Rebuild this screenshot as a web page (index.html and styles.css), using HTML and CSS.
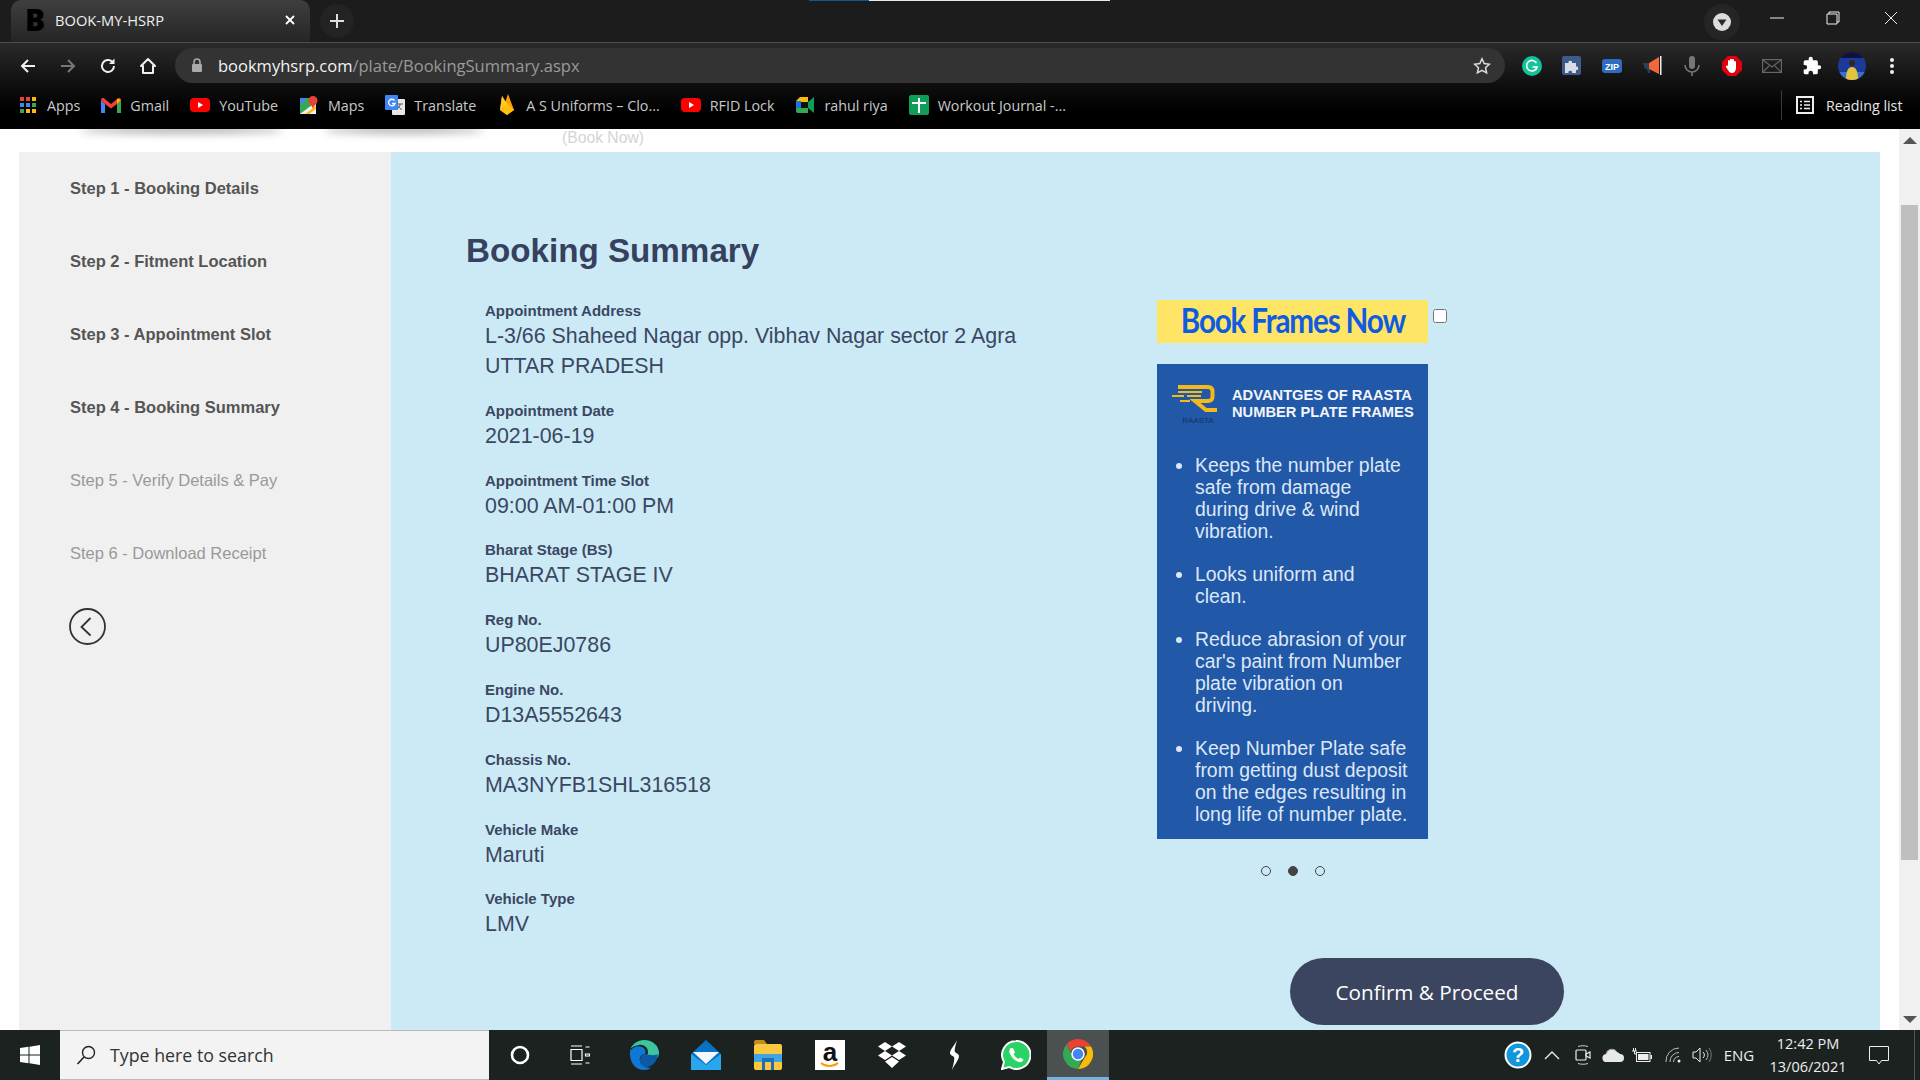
FILE: index.html
```html
<!DOCTYPE html>
<html lang="en">
<head>
  <meta charset="UTF-8">
  <title>BOOK-MY-HSRP</title>
  <link rel="stylesheet" href="styles.css">
</head>
<body>
  <!-- browser: tabs -->
  <div class="tabstrip">
    <div class="share-line"><span class="share-blue"></span></div>
    <div class="tab">
      <span class="favicon">B</span>
      <span class="tab-title">BOOK-MY-HSRP</span>
      <svg class="tab-close" width="12" height="12" viewBox="0 0 12 12"><path d="M2 2l8 8M10 2l-8 8" stroke="#fff" stroke-width="1.8"/></svg>
    </div>
    <div class="new-tab"><svg width="16" height="16" viewBox="0 0 16 16"><path d="M8 1v14M1 8h14" stroke="#ddd" stroke-width="2"/></svg></div>
    <div class="profile-btn"><svg width="20" height="20" viewBox="0 0 20 20"><circle cx="10" cy="10" r="9" fill="#dcdcdc"/><path d="M5.5 7.5h9L10 14z" fill="#2a2a2a"/></svg></div>
    <div class="win-btn"><svg width="14" height="2" viewBox="0 0 14 2"><path d="M0 1h14" stroke="#eee" stroke-width="1"/></svg></div>
    <div class="win-btn"><svg width="14" height="14" viewBox="0 0 14 14"><path d="M3 3V1h10v10h-2M1 3h10v10H1z" fill="none" stroke="#eee" stroke-width="1"/></svg></div>
    <div class="win-btn win-close"><svg width="14" height="14" viewBox="0 0 14 14"><path d="M1 1l12 12M13 1L1 13" stroke="#eee" stroke-width="1"/></svg></div>
  </div>

  <!-- browser: address bar -->
  <div class="toolbar">
    <div class="nav-btn"><svg width="18" height="18" viewBox="0 0 18 18"><path d="M16 9H3M9 3L3 9l6 6" fill="none" stroke="#f0f0f0" stroke-width="2"/></svg></div>
    <div class="nav-btn"><svg width="18" height="18" viewBox="0 0 18 18"><path d="M2 9h13M9 3l6 6-6 6" fill="none" stroke="#777" stroke-width="2"/></svg></div>
    <div class="nav-btn"><svg width="18" height="18" viewBox="0 0 18 18"><path d="M15 9a6 6 0 1 1-1.8-4.3" fill="none" stroke="#f0f0f0" stroke-width="2"/><path d="M15.5 1.5v5.5H10z" fill="#f0f0f0"/></svg></div>
    <div class="nav-btn"><svg width="18" height="18" viewBox="0 0 18 18"><path d="M9 2l7 7h-2v7H4V9H2z" fill="none" stroke="#f0f0f0" stroke-width="2" stroke-linejoin="round"/></svg></div>
    <div class="urlbox">
      <svg width="12" height="15" viewBox="0 0 12 15"><path d="M3 6V4a3 3 0 0 1 6 0v2" fill="none" stroke="#aaa" stroke-width="1.6"/><rect x="1" y="6" width="10" height="8" rx="1" fill="#aaa"/></svg>
      <span class="url"><b>bookmyhsrp.com</b>/plate/BookingSummary.aspx</span>
      <svg class="url-star" width="18" height="18" viewBox="0 0 18 18"><path d="M9 1.8l2.2 4.8 5.2.6-3.9 3.5 1.1 5.2L9 13.3l-4.6 2.6 1.1-5.2-3.9-3.5 5.2-.6z" fill="none" stroke="#ddd" stroke-width="1.5"/></svg>
    </div>
    <div class="ext-list">
      <div class="ext"><svg width="20" height="20" viewBox="0 0 20 20"><circle cx="10" cy="10" r="10" fill="#15c39a"/><path d="M14.5 7a5.3 5.3 0 1 0 .6 4H10.5" fill="none" stroke="#fff" stroke-width="1.6"/></svg></div>
      <div class="ext"><svg width="20" height="20" viewBox="0 0 20 20"><rect width="19" height="19" rx="2" fill="#3e5a88"/><path d="M3 7h3.500a1.800 1.800 0 1 1 3.500 0H14v3.500a1.800 1.800 0 1 1 0 3.500V17H10a1.800 1.800 0 1 0-3.500 0H3z" fill="#d6dde8"/></svg></div>
      <div class="ext"><svg width="20" height="14" viewBox="0 0 20 14"><rect width="20" height="14" rx="3" fill="#2f6cc0"/><text x="10" y="10.5" class="zip-text">ZIP</text></svg></div>
      <div class="ext"><svg width="20" height="20" viewBox="0 0 20 20"><path d="M7 7l10-6v17L7 13z" fill="#f2683c"/><rect x="18" y="0" width="1.5" height="19" fill="#eee"/><path d="M1 7h6v6H3z" fill="#24425f"/><path d="M5 13h3v4H6z" fill="#24425f"/></svg></div>
      <div class="ext"><svg width="16" height="20" viewBox="0 0 16 20"><rect x="5" y="0" width="6" height="13" rx="3" fill="#777"/><path d="M1 9a7 7 0 0 0 14 0M8 16v4" fill="none" stroke="#777" stroke-width="1.6"/></svg></div>
      <div class="ext"><svg width="20" height="20" viewBox="0 0 20 20"><path d="M6 0h8l6 6v8l-6 6H6l-6-6V6z" fill="#e2000f"/><path d="M6 8.500V5a1 1 0 0 1 2 0V3.800a1 1 0 0 1 2 0V4a1 1 0 0 1 2 0v2a1 1 0 0 1 2 0v6c0 3-2 5-4 5s-3-1-4-3l-2-3c-.5-1 .6-1.800 1.400-1z" fill="#fff"/></svg></div>
      <div class="ext"><svg width="20" height="14" viewBox="0 0 20 14"><rect x=".5" y=".5" width="19" height="13" fill="none" stroke="#666" stroke-width="1.4"/><path d="M1 1l9 7 9-7M1 13l6-6M19 13l-6-6" fill="none" stroke="#666" stroke-width="1.2"/></svg></div>
      <div class="ext"><svg width="20" height="20" viewBox="0 0 24 24"><path d="M20.500 11H19V7a2 2 0 0 0-2-2h-4V3.500a2.500 2.500 0 0 0-5 0V5H4a2 2 0 0 0-2 2v3.800h1.500a2.700 2.700 0 0 1 0 5.400H2V20a2 2 0 0 0 2 2h3.800v-1.500a2.700 2.700 0 0 1 5.400 0V22H17a2 2 0 0 0 2-2v-4h1.500a2.500 2.500 0 0 0 0-5z" fill="#fff"/></svg></div>
      <div class="ext"><svg width="28" height="28" viewBox="0 0 28 28"><defs><clipPath id="avatar-clip"><circle cx="14" cy="14" r="14"/></clipPath></defs><g clip-path="url(#avatar-clip)"><rect width="28" height="28" fill="#1c3a9a"/><rect y="0" width="28" height="6" fill="#10143c"/><rect y="20" width="28" height="8" fill="#3a6fc8"/><circle cx="14" cy="11" r="3" fill="#3a2416"/><path d="M8 28c0-9 2-13 6-13s6 4 6 13z" fill="#e3c33e"/></g></svg></div>
      <div class="ext"><svg width="4" height="18" viewBox="0 0 4 18"><circle cx="2" cy="3" r="2" fill="#eee"/><circle cx="2" cy="9" r="2" fill="#eee"/><circle cx="2" cy="15" r="2" fill="#eee"/></svg></div>
    </div>
  </div>

  <!-- browser: bookmarks -->
  <div class="bookmarks">
    <div class="bm"><svg width="16" height="16" viewBox="0 0 16 16"><g><rect x="0" y="0" width="4" height="4" fill="#ea4335"/><rect x="6" y="0" width="4" height="4" fill="#ea4335"/><rect x="12" y="0" width="4" height="4" fill="#fbbc05"/><rect x="0" y="6" width="4" height="4" fill="#4285f4"/><rect x="6" y="6" width="4" height="4" fill="#4285f4"/><rect x="12" y="6" width="4" height="4" fill="#34a853"/><rect x="0" y="12" width="4" height="4" fill="#34a853"/><rect x="6" y="12" width="4" height="4" fill="#fbbc05"/><rect x="12" y="12" width="4" height="4" fill="#fbbc05"/></g></svg><span>Apps</span></div>
    <div class="bm"><svg width="20" height="15" viewBox="0 0 20 15"><path d="M0 2v13h4V6z" fill="#4285f4"/><path d="M20 2v13h-4V6z" fill="#34a853"/><path d="M0 2c0-2 2-2.500 3-1.700L10 6l7-5.700c1-.8 3-.3 3 1.700l-4 4-6 4.500L4 6z" fill="#ea4335"/><path d="M16 .8l4 1.200v0l-4 4z" fill="#fbbc05"/></svg><span>Gmail</span></div>
    <div class="bm"><svg width="20" height="14" viewBox="0 0 20 14"><rect width="20" height="14" rx="4" fill="#f00"/><path d="M8 4l5 3-5 3z" fill="#fff"/></svg><span>YouTube</span></div>
    <div class="bm"><svg width="18" height="18" viewBox="0 0 18 18"><rect y="2" width="16" height="16" fill="#34a853"/><path d="M0 18L16 6v12z" fill="#f1f1f1"/><path d="M0 2h7L0 9z" fill="#4285f4"/><path d="M5 18l11-8v3l-7 5z" fill="#fbbc05"/><path d="M13 0a4.500 4.500 0 0 1 4.500 4.500C17.500 8 14 9 13 13c-1-4-4.500-5-4.500-8.500A4.500 4.500 0 0 1 13 0z" fill="#ea4335"/></svg><span>Maps</span></div>
    <div class="bm"><svg width="20" height="20" viewBox="0 0 20 20"><rect x="7" y="4" width="13" height="16" rx="1" fill="#e8e8e8"/><rect x="0" y="0" width="13" height="15" rx="1" fill="#4285f4"/><path d="M9.500 5.500a3.300 3.300 0 1 0 .6 3H7" fill="none" stroke="#fff" stroke-width="1.300"/><path d="M12 9h6M15 9v1c-.5 2-2 3.500-3 4M13 11c.8 1.500 2.500 3 4 3.500" fill="none" stroke="#555" stroke-width="1"/></svg><span>Translate</span></div>
    <div class="bm"><svg width="16" height="22" viewBox="0 0 16 22"><path d="M1 16L3 2l3.500 5.500L9 0l6 16-7 5z" fill="#ffa000"/><path d="M1 16L3 2l3.500 5.500L9 10z" fill="#ffca28"/><path d="M1 16l8-6 6 6-7 5z" fill="#ffc107"/></svg><span>A S Uniforms – Clo...</span></div>
    <div class="bm"><svg width="20" height="14" viewBox="0 0 20 14"><rect width="20" height="14" rx="4" fill="#f00"/><path d="M8 4l5 3-5 3z" fill="#fff"/></svg><span>RFID Lock</span></div>
    <div class="bm"><svg width="18" height="16" viewBox="0 0 18 16"><path d="M0 4l4-4h8v5H5v4H0z" fill="#fbbc05"/><path d="M0 4h5v7H0z" fill="#1a73e8"/><path d="M0 11h5l1 0h6v5H2a2 2 0 0 1-2-2z" fill="#34a853"/><path d="M5 5h7v6H5z" fill="#111"/><path d="M12 0v16l0 0V11l6 5V0l-6 5z" fill="#0f9d58"/></svg><span>rahul riya</span></div>
    <div class="bm"><svg width="20" height="20" viewBox="0 0 20 20"><rect width="20" height="20" rx="2" fill="#0f9d58"/><path d="M10 3v15M3 8h14" stroke="#fff" stroke-width="2"/></svg><span>Workout Journal -...</span></div>
    <div class="reading-list">
      <svg width="18" height="18" viewBox="0 0 18 18"><rect x="1" y="1" width="16" height="16" fill="none" stroke="#eee" stroke-width="2"/><path d="M4 5.500h2M8 5.500h6M4 9h2M8 9h6M4 12.500h2M8 12.500h6" stroke="#eee" stroke-width="1.600"/></svg>
      <span>Reading list</span>
    </div>
  </div>

  <div class="page">
    <div class="content">
      <div class="top-strip">
        <span class="strip-shadow strip-shadow-a"></span>
        <span class="strip-shadow strip-shadow-b"></span>
        <span class="strip-note">(Book Now)</span>
      </div>
      <div class="panel">
        <aside class="sidebar">
          <div class="step">Step 1 - Booking Details</div>
          <div class="step">Step 2 - Fitment Location</div>
          <div class="step">Step 3 - Appointment Slot</div>
          <div class="step">Step 4 - Booking Summary</div>
          <div class="step step-off">Step 5 - Verify Details &amp; Pay</div>
          <div class="step step-off">Step 6 - Download Receipt</div>
          <div class="back-btn"><svg width="37" height="37" viewBox="0 0 37 37"><circle cx="18.500" cy="18.500" r="17.500" fill="none" stroke="#333" stroke-width="1.800"/><path d="M21.500 10l-9 9 9 8.500" fill="none" stroke="#333" stroke-width="1.800"/></svg></div>
        </aside>
        <main class="main">
          <h1 class="summary-title">Booking Summary</h1>
          <div class="summary-row">
            <div class="details">
              <div class="detail"><div class="detail-label">Appointment Address</div><div class="detail-value">L-3/66 Shaheed Nagar opp. Vibhav Nagar sector 2 Agra<br>UTTAR PRADESH</div></div>
              <div class="detail"><div class="detail-label">Appointment Date</div><div class="detail-value">2021-06-19</div></div>
              <div class="detail"><div class="detail-label">Appointment Time Slot</div><div class="detail-value">09:00 AM-01:00 PM</div></div>
              <div class="detail"><div class="detail-label">Bharat Stage (BS)</div><div class="detail-value">BHARAT STAGE IV</div></div>
              <div class="detail"><div class="detail-label">Reg No.</div><div class="detail-value">UP80EJ0786</div></div>
              <div class="detail"><div class="detail-label">Engine No.</div><div class="detail-value">D13A5552643</div></div>
              <div class="detail"><div class="detail-label">Chassis No.</div><div class="detail-value">MA3NYFB1SHL316518</div></div>
              <div class="detail"><div class="detail-label">Vehicle Make</div><div class="detail-value">Maruti</div></div>
              <div class="detail"><div class="detail-label">Vehicle Type</div><div class="detail-value">LMV</div></div>
            </div>
            <div class="offer">
              <div class="offer-top">
                <div class="frames-banner"><span>Book Frames Now</span></div>
                <input class="frames-check" type="checkbox">
              </div>
              <div class="poster">
                <div class="poster-head">
                  <svg width="46" height="40" viewBox="0 0 46 40">
                    <path d="M6 2h30q4.500 0 4.500 4.500v5q0 4.500-4.500 4.500H23l11 9h11" fill="none" stroke="#f6b91a" stroke-width="4"/>
                    <path d="M6 7h24M0 11h12M15 11h14M8 16h10" stroke="#f6b91a" stroke-width="2.200"/>
                    <text x="26" y="38" class="raasta-text">RAASTA</text>
                  </svg>
                  <div class="poster-title">ADVANTGES OF RAASTA<br>NUMBER PLATE FRAMES</div>
                </div>
                <ul class="poster-list">
                  <li>Keeps the number plate<br>safe from damage<br>during drive &amp; wind<br>vibration.</li>
                  <li>Looks uniform and<br>clean.</li>
                  <li>Reduce abrasion of your<br>car's paint from Number<br>plate vibration on<br>driving.</li>
                  <li>Keep Number Plate safe<br>from getting dust deposit<br>on the edges resulting in<br>long life of number plate.</li>
                </ul>
              </div>
              <div class="dots"><span class="dot"></span><span class="dot dot-on"></span><span class="dot"></span></div>
              <button class="confirm-btn">Confirm &amp; Proceed</button>
            </div>
          </div>
        </main>
      </div>
    </div>
    <div class="scrollbar">
      <div class="scroll-arrow"><svg width="14" height="7" viewBox="0 0 14 7"><path d="M7 0l7 7H0z" fill="#555"/></svg></div>
      <div class="scroll-thumb"></div>
      <div class="scroll-arrow scroll-arrow-down"><svg width="14" height="7" viewBox="0 0 14 7"><path d="M7 7l7-7H0z" fill="#555"/></svg></div>
    </div>
  </div>

  <!-- windows taskbar -->
  <div class="taskbar">
    <div class="start"><svg width="20" height="20" viewBox="0 0 20 20"><path d="M0 3l8.500-1.200V9.500H0zM9.500 1.700L20 0v9.500H9.500zM0 10.500h8.500v7.700L0 17zM9.500 10.500H20V20L9.500 18.300z" fill="#fff"/></svg></div>
    <div class="search">
      <svg width="22" height="22" viewBox="0 0 22 22"><circle cx="13.500" cy="8.500" r="6" fill="none" stroke="#222" stroke-width="1.400"/><path d="M9 13l-6.500 7" stroke="#222" stroke-width="1.600"/></svg>
      <span>Type here to search</span>
    </div>
    <div class="task"><svg width="20" height="20" viewBox="0 0 20 20"><circle cx="10" cy="10" r="8" fill="none" stroke="#fff" stroke-width="2.600"/></svg></div>
    <div class="task task-view"><svg width="20" height="20" viewBox="0 0 20 20"><path d="M1 1h11M1 19h11M1 4.500h11v11H1zM15.500 2h4M15.500 9h4v2h-4zM15.500 18h4" fill="none" stroke="#fff" stroke-width="1.200"/></svg></div>
    <div class="task"><svg width="30" height="30" viewBox="0 0 30 30"><path d="M15 0c9 0 15 6 15 13 0 5-4 7-8 7-3 0-6-1-6-3 0-2 3-1 3-5 0-5-5-8-9-7C4 6 0 9 1 11 2 5 8 0 15 0z" fill="#3cc6a0"/><path d="M1 11c3-4 8-6 12-4 4 2 4 5 3 7-3 0-6 3-5 7 1 4 5 7 11 7-2 1-4 2-7 2C7 30 0 23 1 11z" fill="#0f78d4"/><path d="M16 14c5 1 11 2 13 0-1 8-6 13-11 13-4 0-7-3-7-6 0-4 2-7 5-7z" fill="#0c59a4"/></svg></div>
    <div class="task"><svg width="30" height="30" viewBox="0 0 30 30"><path d="M15 0l15 14v16H0V14z" fill="#0a72c6"/><path d="M2 12h26L15 24z" fill="#f4f8fc"/><path d="M0 14l15 11 15-11v16H0z" fill="#29a6ec"/></svg></div>
    <div class="task"><svg width="28" height="30" viewBox="0 0 28 30"><path d="M0 2a2 2 0 0 1 2-2h8l3 4h-13z" fill="#c48d17"/><rect y="4" width="28" height="26" rx="2" fill="#fcc83f"/><rect y="14" width="28" height="8" fill="#3ea6e6"/><path d="M8 30V18h12v12h-3v-8h-6v8z" fill="#1e6fb8"/></svg></div>
    <div class="task"><div class="amazon"><span>a</span><svg width="20" height="7" viewBox="0 0 20 7"><path d="M1 1c5 4 12 4 17 0" fill="none" stroke="#f90" stroke-width="2"/></svg></div></div>
    <div class="task"><svg width="28" height="26" viewBox="0 0 28 26"><path d="M7 0l7 4.500L7 9 0 4.500zM21 0l7 4.500L21 9l-7-4.500zM7 9l7 4.500L7 18l-7-4.500zM21 9l7 4.500L21 18l-7-4.500zM14 15l7 4.500L14 26l-7-6.500z" fill="#fff"/></svg></div>
    <div class="task"><svg width="14" height="30" viewBox="0 0 14 30"><path d="M10 0C8 5 3 9 3 13c0 2 3 3 4 4 1 2-1 9-2 13 2-5 7-10 7-14 0-2-3-3-4-4-1-2 1-8 2-12z" fill="#fff"/></svg></div>
    <div class="task"><svg width="30" height="30" viewBox="0 0 30 30"><path d="M15 1a14 14 0 0 0-12 21L1 29l7.300-2A14 14 0 1 0 15 1z" fill="#2bd366" stroke="#fff" stroke-width="2"/><path d="M10 8c-2 1-2 4-1 6 2 4 5 7 9 8 2 .5 4-.5 4.500-2.500l-3.500-2-1.500 1.500c-2-1-4-3-5-5l1.500-1.500L12 8z" fill="#fff"/></svg></div>
    <div class="task task-active"><svg width="30" height="30" viewBox="0 0 30 30"><path d="M15 0a15 15 0 0 1 13 7.500H15a7.500 7.500 0 0 0-7 5L3.500 5.500A15 15 0 0 1 15 0z" fill="#ea4335"/><path d="M28 7.500A15 15 0 0 1 15 30l6.500-11a7.500 7.500 0 0 0 0-11.500z" fill="#fbbc05"/><path d="M15 30A15 15 0 0 1 3.500 5.500L10 17a7.500 7.500 0 0 0 8.500 4z" fill="#34a853"/><circle cx="15" cy="15" r="6" fill="#4285f4" stroke="#fff" stroke-width="1.500"/></svg></div>
    <div class="tray">
      <div class="tray-item"><svg width="28" height="28" viewBox="0 0 28 28"><circle cx="14" cy="14" r="12.500" fill="#1296db" stroke="#fff" stroke-width="2"/><text x="14" y="20.500" class="help-text">?</text></svg></div>
      <div class="tray-item"><svg width="16" height="9" viewBox="0 0 16 9"><path d="M1 8l7-7 7 7" fill="none" stroke="#eee" stroke-width="1.300"/></svg></div>
      <div class="tray-item"><svg width="16" height="20" viewBox="0 0 16 20"><path d="M3 1.500c3-1 7-1 10 0M3 18.500c3 1 7 1 10 0" fill="none" stroke="#ccc" stroke-width="1"/><rect x="1" y="5" width="10" height="10" rx="1" fill="none" stroke="#eee" stroke-width="1.200"/><path d="M11 9l4-2v6l-4-2z" fill="none" stroke="#eee" stroke-width="1.200"/></svg></div>
      <div class="tray-item"><svg width="22" height="14" viewBox="0 0 22 14"><path d="M5 14a4 4 0 0 1-1-8 6 6 0 0 1 11-2 5 5 0 0 1 3 2 4 4 0 0 1 0 8z" fill="#e8e8e8"/><path d="M4 6a6 6 0 0 1 11-2" fill="none" stroke="#9a9a9a" stroke-width="1"/></svg></div>
      <div class="tray-item"><svg width="20" height="14" viewBox="0 0 20 14"><path d="M0 3h5M1.500 0v3M3.500 0v3M2.500 3v3H4" fill="none" stroke="#eee" stroke-width="1"/><rect x="4.500" y="4.500" width="13.500" height="9" fill="none" stroke="#eee"/><rect x="6" y="6" width="10.500" height="6" fill="#eee"/><rect x="18.500" y="7" width="1.500" height="4" fill="#eee"/></svg></div>
      <div class="tray-item"><svg width="16" height="16" viewBox="0 0 16 16"><circle cx="14" cy="14" r="1.500" fill="#eee"/><path d="M1 15A13 13 0 0 1 14 1M5 15a9 9 0 0 1 9-9.500M8.500 15a5.500 5.500 0 0 1 5.500-5.500" fill="none" stroke="#bbb" stroke-width="1"/></svg></div>
      <div class="tray-item"><svg width="20" height="16" viewBox="0 0 20 16"><path d="M1 5h3l4-4v14l-4-4H1z" fill="none" stroke="#eee" stroke-width="1"/><path d="M11 5a4 4 0 0 1 0 6" fill="none" stroke="#eee" stroke-width="1"/><path d="M14 3a8 8 0 0 1 0 10" fill="none" stroke="#bbb" stroke-width="1"/><path d="M17 1a12 12 0 0 1 0 14" fill="none" stroke="#777" stroke-width="1"/></svg></div>
      <div class="tray-item tray-text">ENG</div>
      <div class="clock"><span>12:42 PM</span><span>13/06/2021</span></div>
      <div class="tray-item"><svg width="20" height="19" viewBox="0 0 20 19"><path d="M.5.500h19v14h-7L10 18l-2.500-3.500h-7z" fill="none" stroke="#eee" stroke-width="1"/></svg></div>
      <div class="desktop-peek"></div>
    </div>
  </div>
</body>
</html>
```

FILE: styles.css
```css
* {
  box-sizing: border-box;
}
html, body {
  margin: 0;
  height: 100%;
}
body {
  width: 1920px;
  height: 1080px;
  overflow: hidden;
  display: flex;
  flex-direction: column;
  background: #fff;
  font-family: "Liberation Sans", Arial, sans-serif;
}

/* tab strip */
.tabstrip {
  position: relative;
  height: 43px;
  display: flex;
  background: #1c1c1c;
  border-bottom: 1px solid #4c4c4c;
}
.share-line {
  position: absolute;
  top: 0;
  left: 809px;
  width: 301px;
  height: 1px;
  background: #e8e8e8;
}
.share-blue {
  display: block;
  width: 60px;
  height: 1px;
  background: #12568f;
}
.tab {
  width: 299px;
  height: 42px;
  margin-left: 11px;
  display: flex;
  align-items: center;
  padding: 0 0 2px 14px;
  border-radius: 10px 10px 0 0;
  background: linear-gradient(#3f3f3f, #252525);
}
.favicon {
  width: 30px;
  font-family: "Open Sans", sans-serif;
  font-weight: 800;
  font-size: 30px;
  line-height: 1;
  color: #000;
}
.tab-title {
  width: 229px;
  color: #eee;
  font-family: "Open Sans", sans-serif;
  font-size: 14.700px;
}
.new-tab {
  width: 34px;
  height: 34px;
  margin: 4px 0 0 10px;
  display: flex;
  align-items: center;
  justify-content: center;
  border-radius: 50%;
  background: #232323;
}
.profile-btn {
  width: 36px;
  height: 36px;
  margin: 4px 0 0 1350px;
  display: flex;
  align-items: center;
  justify-content: center;
  border-radius: 50%;
  background: #252525;
}
.win-btn {
  width: 56px;
  height: 36px;
  display: flex;
  align-items: center;
  justify-content: center;
}
.profile-btn + .win-btn {
  margin-left: 9px;
}
.win-close {
  margin-left: 2px;
}

/* address bar */
.toolbar {
  height: 40px;
  padding: 5px 0 0 8px;
  display: flex;
  background: linear-gradient(#2a2a2a, #101010);
}
.nav-btn {
  width: 40px;
  height: 35px;
  display: flex;
  align-items: center;
  justify-content: center;
}
.urlbox {
  width: 1330px;
  height: 35px;
  margin-left: 7px;
  padding: 0 14px 0 16px;
  display: flex;
  align-items: center;
  border-radius: 18px;
  background: #333;
}
.url {
  margin-left: 15px;
  font-family: "Open Sans", sans-serif;
  font-size: 16.500px;
  color: #9a9a9a;
}
.url b {
  font-weight: 400;
  color: #f2f2f2;
}
.url-star {
  margin-left: auto;
}
.ext-list {
  margin-left: 7px;
  display: flex;
}
.ext {
  width: 40px;
  height: 35px;
  display: flex;
  align-items: center;
  justify-content: center;
}
.zip-text {
  font-family: "Liberation Sans", sans-serif;
  font-size: 9px;
  font-weight: 700;
  fill: #fff;
  text-anchor: middle;
}

/* bookmarks */
.bookmarks {
  height: 46px;
  padding: 0 0 2px 16px;
  display: flex;
  align-items: center;
  gap: 19px;
  background: linear-gradient(#101010, #000 60%);
  font-family: "Open Sans", sans-serif;
  font-size: 14.300px;
  color: #c9c9c9;
}
.bm {
  display: flex;
  align-items: center;
}
.bm svg {
  margin: 0 2px;
  width: 20px;
}
.bm span {
  margin-left: 7px;
}
.reading-list {
  margin-left: auto;
  width: 139px;
  height: 30px;
  padding-left: 14px;
  display: flex;
  align-items: center;
  gap: 12px;
  border-left: 1px solid #3a3a3a;
  color: #e6e6e6;
}

/* page */
.page {
  height: 901px;
  display: flex;
}
.content {
  width: 1899px;
  padding: 0 19px;
  display: flex;
  flex-direction: column;
}
.top-strip {
  position: relative;
  height: 23px;
  flex: none;
}
.strip-shadow {
  position: absolute;
  top: -6px;
  height: 6px;
  border-radius: 50%;
  box-shadow: 0 4px 8px rgba(0, 0, 0, 0.4);
}
.strip-shadow-a {
  left: 60px;
  width: 205px;
}
.strip-shadow-b {
  left: 305px;
  width: 160px;
}
.strip-note {
  position: absolute;
  left: 543px;
  top: 0;
  font-size: 15.700px;
  line-height: 17px;
  color: #d4d4d4;
}
.panel {
  flex: 1;
  display: flex;
}
.sidebar {
  width: 372px;
  padding: 26px 0 0 51px;
  display: flex;
  flex-direction: column;
  gap: 53px;
  background: #f0f0f0;
}
.step {
  font-size: 16.500px;
  font-weight: 700;
  line-height: 20px;
  color: #555;
}
.step-off {
  font-weight: 400;
  color: #999;
}
.back-btn {
  margin: -8px 0 0 -1px;
  height: 37px;
}
.main {
  flex: 1;
  padding: 79px 0 0 75px;
  background: #cceaf5;
}
.summary-title {
  margin: 0 0 29px;
  font-size: 33.200px;
  font-weight: 700;
  line-height: 40px;
  color: #35415f;
}
.summary-row {
  display: flex;
}
.details {
  width: 691px;
  padding: 1px 0 0 19px;
  display: flex;
  flex-direction: column;
  gap: 19.800px;
  color: #3a4763;
}
.detail-label {
  font-size: 15px;
  font-weight: 700;
  line-height: 20px;
}
.detail-value {
  font-size: 21.400px;
  line-height: 30px;
}
.offer {
  width: 407px;
  display: flex;
  flex-direction: column;
}
.offer-top {
  display: flex;
  align-items: flex-start;
}
.frames-banner {
  width: 271px;
  height: 43px;
  text-align: center;
  background: #ffe566;
  font-family: "Lato", sans-serif;
  font-size: 34px;
  font-weight: 700;
  line-height: 39px;
  letter-spacing: -1.300px;
  color: #0f5ce2;
}
.frames-banner span {
  display: inline-block;
  transform: scaleX(0.87);
}
.frames-check {
  width: 14px;
  height: 14px;
  margin: 9px 0 0 5px;
}
.poster {
  width: 271px;
  height: 475px;
  margin-top: 21px;
  padding: 21px 0 0 15px;
  background: #2258a8;
}
.poster-head {
  display: flex;
  gap: 14px;
}
.poster-title {
  margin-top: 2px;
  font-size: 14.700px;
  font-weight: 700;
  line-height: 17px;
  color: #f2f5fa;
}
.raasta-text {
  font-family: "Liberation Sans", sans-serif;
  font-size: 8px;
  fill: #16305f;
  text-anchor: middle;
}
.poster-list {
  margin: 29px 0 0;
  padding: 0 0 0 23px;
  font-size: 19.400px;
  line-height: 22px;
  color: #dde7f5;
}
.poster-list li {
  margin-bottom: 21px;
}
.dots {
  width: 271px;
  margin-top: 27px;
  display: flex;
  justify-content: center;
  gap: 17px;
}
.dot {
  width: 10px;
  height: 10px;
  border: 1px solid #444;
  border-radius: 50%;
}
.dot-on {
  background: #444;
}
.confirm-btn {
  align-self: flex-end;
  width: 274px;
  height: 67px;
  margin-top: 82px;
  border: none;
  border-radius: 34px;
  background: #3b4560;
  font-family: "Open Sans", sans-serif;
  font-size: 20.700px;
  color: #fff;
}

/* page scrollbar */
.scrollbar {
  width: 21px;
  display: flex;
  flex-direction: column;
  align-items: center;
  background: #f0f0f0;
}
.scroll-arrow {
  height: 22px;
  display: flex;
  align-items: center;
  justify-content: center;
}
.scroll-thumb {
  width: 17px;
  height: 655px;
  margin-top: 54px;
  background: #bfbfbf;
}
.scroll-arrow-down {
  margin-top: auto;
}

/* taskbar */
.taskbar {
  height: 50px;
  display: flex;
  background: #1b2220;
}
.start {
  width: 60px;
  display: flex;
  align-items: center;
  justify-content: center;
}
.search {
  width: 429px;
  padding-left: 15px;
  display: flex;
  align-items: center;
  gap: 13px;
  background: #f3f3f3;
  border-top: 1px solid #bbb;
  border-bottom: 1px solid #bbb;
  font-family: "Open Sans", sans-serif;
  font-size: 17.800px;
  color: #333;
}
.task {
  width: 62px;
  display: flex;
  align-items: center;
  justify-content: center;
}
.task-view {
  padding-right: 4px;
}
.task-active {
  background: #4a5150;
  border-bottom: 3px solid #7ab0dc;
}
.amazon {
  width: 30px;
  height: 30px;
  position: relative;
  display: flex;
  justify-content: center;
  background: #fff;
  font-family: "Liberation Sans", sans-serif;
  font-size: 26px;
  font-weight: 700;
  line-height: 24px;
  color: #111;
}
.amazon svg {
  position: absolute;
  left: 5px;
  bottom: 1px;
}
.tray {
  margin-left: auto;
  display: grid;
  grid-template-columns: 36px 32px 30px 29px 30px 31px 28px 46px 92px 50px 16px;
  color: #eee;
  font-family: "Open Sans", sans-serif;
  font-size: 15px;
}
.tray-item {
  display: flex;
  align-items: center;
  justify-content: center;
}
.help-text {
  font-family: "Liberation Sans", sans-serif;
  font-size: 20px;
  font-weight: 700;
  fill: #fff;
  text-anchor: middle;
}
.clock {
  display: flex;
  flex-direction: column;
  align-items: center;
  justify-content: center;
  gap: 3px;
  line-height: 20px;
  font-size: 14.500px;
}
.desktop-peek {
  margin-left: 10px;
  border-left: 1px solid #555;
}
```
